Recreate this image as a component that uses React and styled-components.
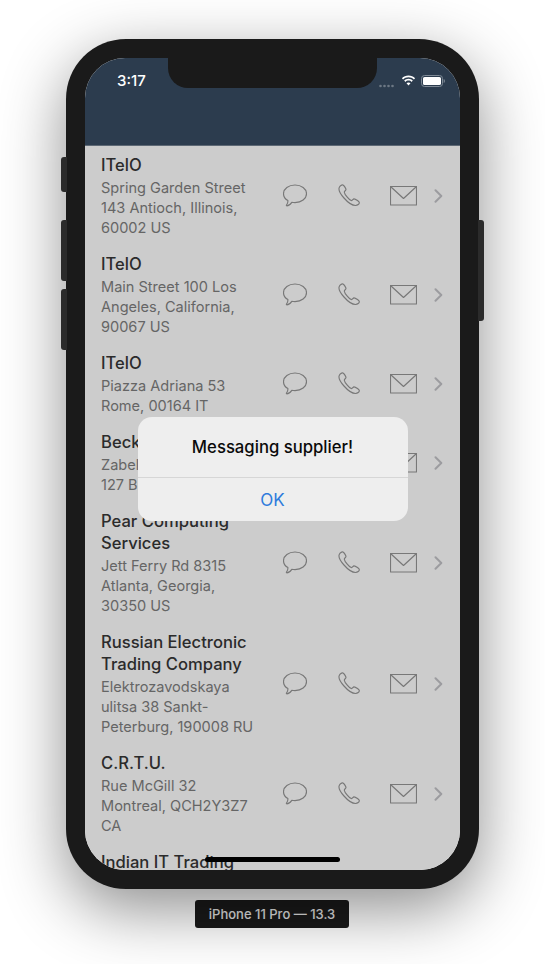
import React from 'react';
import styled, { createGlobalStyle } from 'styled-components';

const GlobalStyle = createGlobalStyle`
  html, body { margin: 0; padding: 0; background: #fff; }
  body { font-family: Inter, "Liberation Sans", sans-serif; overflow: hidden; }
`;

const Stage = styled.div`
  width: 545px;
  height: 964px;
  padding: 39px 0 0 66px;
  box-sizing: border-box;
  display: flex;
  flex-direction: column;
  align-items: flex-start;
`;

const Device = styled.div`
  position: relative;
  width: 413px;
  height: 850px;
  padding: 19px;
  box-sizing: border-box;
  border-radius: 60px;
  background: #1a1a1a;
  box-shadow: 0 20px 65px rgba(0, 0, 0, 0.45);
`;

const SideButton = styled.div`
  position: absolute;
  top: ${p => p.$top}px;
  ${p => (p.$right ? 'right: -5px;' : 'left: -5px;')}
  width: 6px;
  height: ${p => p.$height}px;
  border-radius: ${p => (p.$right ? '0 3px 3px 0' : '3px 0 0 3px')};
  background: #2b2b2b;
`;

const Screen = styled.div`
  position: relative;
  width: 375px;
  height: 812px;
  border-radius: 40px;
  overflow: hidden;
  background: #fff;
  display: flex;
  flex-direction: column;
`;

const Notch = styled.div`
  position: absolute;
  top: 0;
  left: 83px;
  width: 209px;
  height: 30px;
  background: #1a1a1a;
  border-radius: 0 0 20px 20px;
  z-index: 3;
`;

const Header = styled.header`
  height: 88px;
  flex: none;
  background: #2c3c4e;
  box-sizing: border-box;
  border-bottom: 1px solid #5d6874;
`;

const StatusBar = styled.div`
  height: 44px;
  padding: 14px 15px 0 32px;
  box-sizing: border-box;
  display: flex;
  align-items: flex-start;
  justify-content: space-between;
  color: #fff;
`;

const Clock = styled.span`
  font-size: 15px;
  font-weight: 500;
  line-height: 18px;
`;

const StatusIcons = styled.div`
  display: flex;
  align-items: center;
  gap: 5px;
  height: 18px;
`;

const List = styled.div`
  position: relative;
  flex: 1;
  overflow: hidden;
  background: #fff;
`;

const Row = styled.div`
  display: flex;
  align-items: center;
  padding: 8px 17px 7px 16px;
`;

const Info = styled.div`
  flex: 1;
  min-width: 0;
`;

const Title = styled.div`
  font-size: 16.6px;
  font-weight: 500;
  line-height: 22px;
  color: #363636;
  white-space: nowrap;
`;

const AddressBlock = styled.div`
  margin-top: 2px;
`;

const Address = styled.div`
  font-size: 14.55px;
  line-height: 20px;
  color: #7f7f7f;
  white-space: nowrap;
`;

const Actions = styled.div`
  display: flex;
  align-items: center;
  flex: none;
  margin-top: -1px;
`;

const ActionSlot = styled.div`
  width: ${p => p.$width}px;
  display: flex;
  justify-content: ${p => p.$align || 'flex-start'};
`;

const Icon = styled.svg`
  display: block;
  fill: none;
  stroke: #969696;
  stroke-width: 1.15;
  stroke-linejoin: round;
  stroke-linecap: round;
`;

const Chevron = styled(Icon)`
  stroke: #c4c4c8;
  stroke-width: 2;
`;

const Scrim = styled.div`
  position: absolute;
  inset: 0;
  background: rgba(0, 0, 0, 0.2);
`;

const AlertLayer = styled.div`
  position: absolute;
  inset: 0;
  padding-top: 10px;
  box-sizing: border-box;
  display: flex;
  align-items: center;
  justify-content: center;
  z-index: 2;
`;

const Alert = styled.div`
  width: 270px;
  height: 104px;
  border-radius: 14px;
  background: #eeeeee;
  display: flex;
  flex-direction: column;
`;

const AlertMessage = styled.div`
  height: 61px;
  box-sizing: border-box;
  display: flex;
  align-items: center;
  justify-content: center;
  font-size: 16.7px;
  font-weight: 500;
  color: #0a0a0a;
  border-bottom: 1px solid #d6d6d6;
`;

const AlertButton = styled.div`
  flex: 1;
  display: flex;
  align-items: center;
  justify-content: center;
  font-size: 17px;
  color: #2d7bdc;
`;

const HomeBar = styled.div`
  position: absolute;
  left: 120px;
  bottom: 8px;
  width: 135px;
  height: 5px;
  border-radius: 3px;
  background: #000;
  z-index: 3;
`;

const DeviceLabel = styled.div`
  margin: 11px 0 0 129px;
  width: 154px;
  height: 28px;
  border-radius: 3px;
  background: #1a1a1a;
  color: #e4e4e4;
  font-size: 13px;
  font-weight: 500;
  display: flex;
  align-items: center;
  justify-content: center;
  white-space: nowrap;
`;

const suppliers = [
  { name: ['ITelO'], address: ['Spring Garden Street', '143 Antioch, Illinois,', '60002 US'] },
  { name: ['ITelO'], address: ['Main Street 100 Los', 'Angeles, California,', '90067 US'] },
  { name: ['ITelO'], address: ['Piazza Adriana 53', 'Rome, 00164 IT'] },
  { name: ['Beckman Coulter'], address: ['Zabel Strasse 10', '127 Berlin, DE'] },
  { name: ['Pear Computing', 'Services'], address: ['Jett Ferry Rd 8315', 'Atlanta, Georgia,', '30350 US'] },
  { name: ['Russian Electronic', 'Trading Company'], address: ['Elektrozavodskaya', 'ulitsa 38 Sankt-', 'Peterburg, 190008 RU'] },
  { name: ['C.R.T.U.'], address: ['Rue McGill 32', 'Montreal, QCH2Y3Z7', 'CA'] },
  { name: ['Indian IT Trading', 'Company'], address: ['Sector 18', 'Noida, 201301 IN'] },
];

const ChatIcon = () => (
  <Icon width="24" height="23" viewBox="0 0 24 23">
    <path d="M12 1C18.4 1 23.5 4.8 23.5 9.8C23.5 14.8 18.4 18.6 12 18.6C10.8 18.6 9.8 18.5 8.8 18.3C7.6 20 5.5 21.8 3.8 21.8C3.2 21.8 3.2 21.3 3.6 20.9C4.6 19.9 5 18.5 4.9 16.6C2.2 15 .5 12.6 .5 9.8C.5 4.8 5.6 1 12 1Z" />
  </Icon>
);

const PhoneIcon = () => (
  <Icon width="23" height="23" viewBox="0 0 23 23">
    <path d="M1.2 3.6C.3 6 2.5 10 6 14C9.5 18 14 21.5 17.5 21.5C19.5 21.5 21.5 20 21.3 18.5C21.2 17.8 20.5 17.2 19.5 16.5C18 15.5 16.8 14.8 16 14.9C15 15.1 14.6 16.5 13.5 16.6C11.5 16.5 6.6 10.5 6.3 8.2C6.3 7 8 6.6 8 5.5C7.9 4.5 6.2 1.6 5 1C3.8 .5 1.9 1.8 1.2 3.6Z" />
  </Icon>
);

const MailIcon = () => (
  <Icon width="27" height="20" viewBox="0 0 27 20">
    <rect x=".5" y=".5" width="26" height="18.5" />
    <path d="M.5 .5L13.5 12.5L26.5 .5" />
  </Icon>
);

const ChevronIcon = () => (
  <Chevron width="9" height="14" viewBox="0 0 9 14">
    <path d="M1.5 1.2L7.3 7L1.5 12.8" />
  </Chevron>
);

const SignalDots = () => (
  <svg width="17" height="4" viewBox="0 0 17 4" style={{ marginTop: 9 }}>
    {[1.5, 5.5, 9.5, 13.5].map(cx => (
      <circle key={cx} cx={cx} cy="2" r="1.3" fill="#6d7885" />
    ))}
  </svg>
);

const WifiIcon = () => (
  <svg width="15" height="11" viewBox="0 0 15 11" style={{ marginTop: -1 }}>
    <path d="M7.5 2.3C9.6 2.3 11.5 3.1 12.9 4.5L14.1 3.2C12.4 1.5 10.1.5 7.5.5C4.9.5 2.6 1.5.9 3.2L2.1 4.5C3.5 3.1 5.4 2.3 7.5 2.3Z" fill="#fff" />
    <path d="M7.5 5.6C8.7 5.6 9.8 6.1 10.6 6.9L11.8 5.6C10.7 4.5 9.2 3.8 7.5 3.8C5.8 3.8 4.3 4.5 3.2 5.6L4.4 6.9C5.2 6.1 6.3 5.6 7.5 5.6Z" fill="#fff" />
    <path d="M7.5 10.6L9.5 8.3C9 7.8 8.3 7.4 7.5 7.4C6.7 7.4 6 7.8 5.5 8.3Z" fill="#fff" />
  </svg>
);

const BatteryIcon = () => (
  <svg width="24" height="12" viewBox="0 0 24 12" style={{ marginTop: -1 }}>
    <rect x=".5" y=".5" width="21" height="11" rx="3" fill="none" stroke="#7f8a96" />
    <rect x="2" y="2" width="18" height="8" rx="1.6" fill="#fff" />
    <path d="M22.7 4v4c.7-.2 1.2-1 1.2-2s-.5-1.8-1.2-2Z" fill="#7f8a96" />
  </svg>
);

const SupplierRow = ({ supplier }) => (
  <Row>
    <Info>
      {supplier.name.map(line => <Title key={line}>{line}</Title>)}
      <AddressBlock>
        {supplier.address.map(line => <Address key={line}>{line}</Address>)}
      </AddressBlock>
    </Info>
    <Actions>
      <ActionSlot $width={55}><ChatIcon /></ActionSlot>
      <ActionSlot $width={52}><PhoneIcon /></ActionSlot>
      <ActionSlot $width={44}><MailIcon /></ActionSlot>
      <ActionSlot $width={9} $align="flex-end"><ChevronIcon /></ActionSlot>
    </Actions>
  </Row>
);

export default function App() {
  return (
    <Stage>
      <GlobalStyle />
      <Device>
        <SideButton $top={118} $height={35} />
        <SideButton $top={181} $height={61} />
        <SideButton $top={250} $height={61} />
        <SideButton $right $top={181} $height={101} />
        <Screen>
          <Notch />
          <Header>
            <StatusBar>
              <Clock>3:17</Clock>
              <StatusIcons>
                <SignalDots />
                <WifiIcon />
                <BatteryIcon />
              </StatusIcons>
            </StatusBar>
          </Header>
          <List>
            {suppliers.map((supplier, index) => (
              <SupplierRow key={index} supplier={supplier} />
            ))}
            <Scrim />
          </List>
          <AlertLayer>
            <Alert>
              <AlertMessage>Messaging supplier!</AlertMessage>
              <AlertButton>OK</AlertButton>
            </Alert>
          </AlertLayer>
          <HomeBar />
        </Screen>
      </Device>
      <DeviceLabel>iPhone 11 Pro — 13.3</DeviceLabel>
    </Stage>
  );
}
